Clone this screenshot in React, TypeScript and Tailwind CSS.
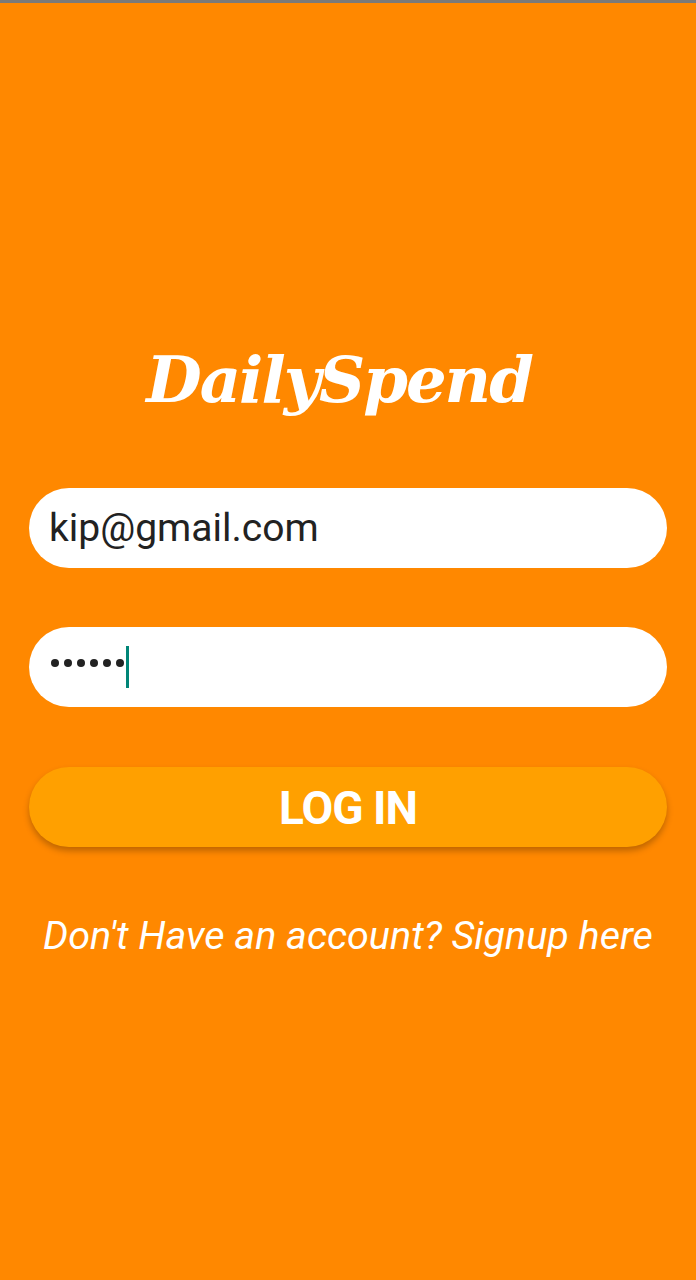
import React from 'react';

// Pantalla de inicio de sesión de DailySpend
export default function App() {
  return (
    <div className="w-[696px] h-[1280px] bg-[#ff8800] flex flex-col border-t-[3px] border-[#7a7a7a]">
      <div className="h-[327px]" />

      {/* Título */}
      <h1 className="text-center text-white font-bold italic text-[64px] leading-[100px] font-['DejaVu_Serif',serif] tracking-[-2px] pr-[18px]">
        DailySpend
      </h1>

      <div className="px-[29px] flex flex-col mt-[58px]">
        {/* Email */}
        <div className="h-[80px] rounded-full bg-white flex items-center pl-[20px] text-[39px] text-[#222] font-['Roboto',sans-serif]">
          kip@gmail.com
        </div>

        {/* Contraseña */}
        <div className="h-[80px] rounded-full bg-white flex items-center pl-[22px] mt-[59px]">
          <div className="flex items-center gap-[5px] mt-[-8px]">
            {[0, 1, 2, 3, 4, 5].map((i) => (
              <span key={i} className="w-[8px] h-[8px] rounded-full bg-[#222]" />
            ))}
          </div>
          <span className="w-[3px] h-[42px] bg-[#008577] ml-[2px]" />
        </div>

        {/* Botón */}
        <button className="h-[80px] mt-[60px] rounded-full bg-[#ffa000] shadow-[0_4px_6px_rgba(0,0,0,0.25)] text-white font-bold text-[46px] font-['Roboto',sans-serif] tracking-[-1px] pt-[3px]">
          LOG IN
        </button>

        <p className="text-center text-white italic text-[39.5px] mt-[59px] font-['Roboto',sans-serif]">
          Don't Have an account? Signup here
        </p>
      </div>
    </div>
  );
}
